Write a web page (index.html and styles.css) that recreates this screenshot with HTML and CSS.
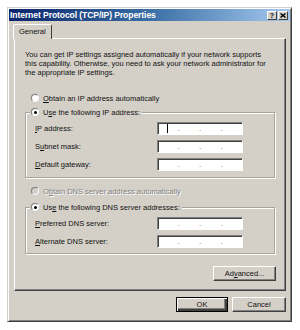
FILE: index.html
```html
<!DOCTYPE html>
<html lang="en">
<head>
    <meta charset="UTF-8">
    <title>Internet Protocol (TCP/IP) Properties</title>
    <link rel="stylesheet" href="styles.css">
</head>
<body>
    <div class="window">
        <div class="titlebar">
            <span class="title">Internet Protocol (TCP/IP) Properties</span>
            <div class="caption-buttons">
                <span class="cap-btn">?</span>
                <span class="cap-btn">
                    <svg width="6" height="5" viewBox="0 0 6 5"><path d="M0.5 0.5 L5.5 4.5 M5.5 0.5 L0.5 4.5" stroke="#000" stroke-width="1.4"/></svg>
                </span>
            </div>
        </div>
        <div class="body">
            <div class="tabs"><span class="tab">General</span></div>
            <div class="panel">
                <p class="intro">You can get IP settings assigned automatically if your network supports this capability. Otherwise, you need to ask your network administrator for the appropriate IP settings.</p>

                <div class="option"><span class="radio"></span><span><u>O</u>btain an IP address automatically</span></div>

                <fieldset class="group">
                    <legend class="option"><span class="radio checked"></span><span>U<u>s</u>e the following IP address:</span></legend>
                    <div class="field">
                        <span><u>I</u>P address:</span>
                        <div class="ip"><span class="seg"><span class="caret"></span></span><span class="dot">.</span><span class="seg"></span><span class="dot">.</span><span class="seg"></span><span class="dot">.</span><span class="seg"></span></div>
                    </div>
                    <div class="field">
                        <span>S<u>u</u>bnet mask:</span>
                        <div class="ip"><span class="seg"></span><span class="dot">.</span><span class="seg"></span><span class="dot">.</span><span class="seg"></span><span class="dot">.</span><span class="seg"></span></div>
                    </div>
                    <div class="field">
                        <span><u>D</u>efault gateway:</span>
                        <div class="ip"><span class="seg"></span><span class="dot">.</span><span class="seg"></span><span class="dot">.</span><span class="seg"></span><span class="dot">.</span><span class="seg"></span></div>
                    </div>
                </fieldset>

                <div class="option disabled"><span class="radio"></span><span>O<u>b</u>tain DNS server address automatically</span></div>

                <fieldset class="group dns">
                    <legend class="option"><span class="radio checked"></span><span>Us<u>e</u> the following DNS server addresses:</span></legend>
                    <div class="field">
                        <span><u>P</u>referred DNS server:</span>
                        <div class="ip"><span class="seg"></span><span class="dot">.</span><span class="seg"></span><span class="dot">.</span><span class="seg"></span><span class="dot">.</span><span class="seg"></span></div>
                    </div>
                    <div class="field">
                        <span><u>A</u>lternate DNS server:</span>
                        <div class="ip"><span class="seg"></span><span class="dot">.</span><span class="seg"></span><span class="dot">.</span><span class="seg"></span><span class="dot">.</span><span class="seg"></span></div>
                    </div>
                </fieldset>

                <div class="advanced-row">
                    <button class="btn advanced">Ad<u>v</u>anced...</button>
                </div>
            </div>
            <div class="footer">
                <button class="btn ok">OK</button>
                <button class="btn cancel">Cancel</button>
            </div>
        </div>
    </div>
</body>
</html>
```

FILE: styles.css
```css
* {
    box-sizing: border-box;
}

body {
    margin: 0;
    background-color: white;
    font-family: "Liberation Sans", Arial, sans-serif;
    font-size: 7.5px;
    color: #111;
}

.window {
    display: flex;
    flex-direction: column;
    width: 285px;
    height: 315px;
    margin: 7px 0 0 7px;
    padding: 1px;
    background-color: #d4d0c8;
    border: 1px solid;
    border-color: #d4d0c8 #404040 #404040 #d4d0c8;
    box-shadow: inset 1px 1px 0 #fff, inset -1px -1px 0 #808080;
}

.titlebar {
    display: flex;
    align-items: center;
    justify-content: space-between;
    height: 12px;
    padding: 0 2px 0 1px;
    background: linear-gradient(to right, #0a246a, #3a6ea5 50%, #a6caf0);
}

.title {
    color: white;
    font-weight: bold;
    font-size: 8.6px;
    letter-spacing: -0.1px;
}

.caption-buttons {
    display: flex;
    gap: 1px;
}

.cap-btn {
    display: flex;
    align-items: center;
    justify-content: center;
    width: 10px;
    height: 9px;
    background-color: #d4d0c8;
    border: 1px solid;
    border-color: #fff #404040 #404040 #fff;
    font-weight: bold;
    font-size: 7px;
    line-height: 1;
}

.body {
    display: flex;
    flex-direction: column;
    padding: 3px 4px 0 5px;
}

.tabs {
    display: flex;
}

.tab {
    position: relative;
    z-index: 1;
    margin-left: -1px;
    height: 15px;
    margin-bottom: -1px;
    padding: 2px 5px 0 5px;
    background-color: #d4d0c8;
    border: 1px solid;
    border-bottom: none;
    border-color: #fff #404040 transparent #fff;
    border-radius: 2px 2px 0 0;
}

.panel {
    display: flex;
    flex-direction: column;
    padding: 11px 10px 9px 10px;
    border: 1px solid;
    border-color: #fff #404040 #404040 #fff;
    box-shadow: inset -1px -1px 0 #808080;
}

.intro {
    margin: 0 8px 0 0;
    line-height: 9px;
}

.option {
    display: flex;
    align-items: center;
    gap: 4px;
    height: 10px;
    margin: 16px 0 0 6px;
}

.option.disabled {
    margin-top: 8px;
    color: #808080;
    text-shadow: 1px 1px 0 #fff;
}

.radio {
    position: relative;
    width: 8px;
    height: 8px;
    border-radius: 50%;
    background-color: white;
    border: 1px solid;
    border-color: #808080 #fff #fff #808080;
    box-shadow: 0 0 0 0.5px #c0c0c0;
}

.option.disabled .radio {
    background-color: #d4d0c8;
}

.radio.checked::after {
    content: "";
    position: absolute;
    left: 1.5px;
    top: 1.5px;
    width: 3px;
    height: 3px;
    border-radius: 50%;
    background-color: black;
}

.group {
    margin: 4px 0 0 0;
    padding: 5px 31px 6px 4px;
    border: 1px solid #a8a49c;
    box-shadow: 1px 1px 0 #fff, inset 1px 1px 0 #fff;
}

.group.dns {
    margin-top: 6px;
    padding-bottom: 5px;
}

.group legend {
    margin: 0;
    padding: 0 2px 0 1px;
    background-color: #d4d0c8;
}

.field {
    display: flex;
    align-items: center;
    justify-content: space-between;
    height: 13px;
    padding-left: 5px;
}

.field + .field {
    margin-top: 5px;
}

.ip {
    display: flex;
    align-items: center;
    width: 86px;
    height: 13px;
    background-color: white;
    border: 1px solid;
    border-color: #808080 #fff #fff #808080;
    box-shadow: inset 1px 1px 0 #404040;
}

.seg {
    display: flex;
    justify-content: center;
    width: 20px;
}

.dot {
    display: flex;
    justify-content: center;
    width: 2px;
    margin-top: 1px;
    color: #666;
    font-size: 8px;
    line-height: 1;
}

.caret {
    width: 1px;
    height: 9px;
    background-color: black;
}

.advanced-row {
    display: flex;
    justify-content: flex-end;
    margin-top: 12px;
}

.btn {
    height: 15px;
    padding: 0;
    font-family: inherit;
    font-size: 7.5px;
    color: #111;
    background-color: #d4d0c8;
    border: 1px solid;
    border-color: #fff #404040 #404040 #fff;
    box-shadow: inset -1px -1px 0 #808080;
}

.advanced {
    width: 63px;
    margin-right: -1px;
}

.footer {
    display: flex;
    justify-content: flex-end;
    gap: 4px;
    margin-top: 6px;
}

.ok {
    width: 52px;
    border-color: #000;
    box-shadow: inset 1px 1px 0 #fff, inset -2px -2px 0 #404040, inset -3px -3px 0 #808080;
}

.cancel {
    width: 54px;
}
```
